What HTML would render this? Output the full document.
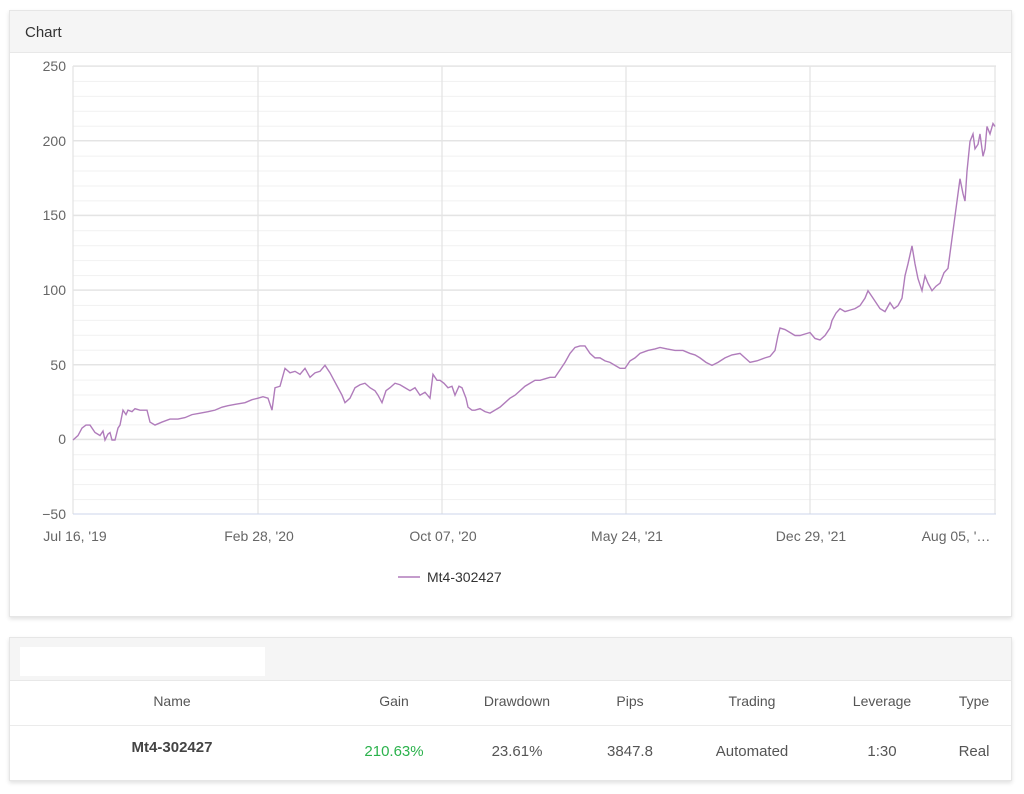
<!DOCTYPE html>
<html><head><meta charset="utf-8"><style>
body{margin:0;width:1024px;height:794px;background:#fff;font-family:"Liberation Sans",sans-serif;position:relative;overflow:hidden}
.panel{position:absolute;left:9px;width:1001px;background:#fff;border:1px solid #e6e6e6;box-shadow:0 2px 4px rgba(0,0,0,.12)}
.hd{background:#f5f5f5;border-bottom:1px solid #e8e8e8}
.t{position:absolute;font-size:14px;color:#555;white-space:nowrap}
.c{transform:translateX(-50%)}
</style></head><body>
<div class="panel" style="top:10px;height:605px">
  <div class="hd" style="height:41px"><div class="t" style="left:15px;top:13px;font-size:15px;color:#333">Chart</div></div>
</div>
<svg style="position:absolute;left:0;top:0" width="1024" height="620">
  <defs><pattern id="g" x="0" y="66" width="10" height="14.933" patternUnits="userSpaceOnUse"><line x1="0" y1="0.5" x2="10" y2="0.5" stroke="#f1f1f1" stroke-width="1"/></pattern></defs>
  <rect x="73" y="66" width="923" height="448" fill="url(#g)"/>
  <g stroke="#e4e4e4" stroke-width="1.3">
    <line x1="73" y1="66" x2="996" y2="66"/><line x1="73" y1="140.7" x2="996" y2="140.7"/><line x1="73" y1="215.3" x2="996" y2="215.3"/><line x1="73" y1="290" x2="996" y2="290"/><line x1="73" y1="364.7" x2="996" y2="364.7"/><line x1="73" y1="439.3" x2="996" y2="439.3"/>
    <line x1="73" y1="66" x2="73" y2="514"/><line x1="258" y1="66" x2="258" y2="514"/><line x1="442" y1="66" x2="442" y2="514"/><line x1="626" y1="66" x2="626" y2="514"/><line x1="810" y1="66" x2="810" y2="514"/><line x1="995" y1="66" x2="995" y2="514"/>
  </g>
  <line x1="73" y1="514" x2="996" y2="514" stroke="#ccd6eb"/>
  <g transform="translate(0,440) scale(1,-1.493)">
  <polyline fill="none" stroke="#b07cbb" stroke-width="1.4" vector-effect="non-scaling-stroke" points="73,0 78,3 82,8 86,10 90,10 95,5 100,3 103,6 105,0 108,4 110,5 112,0 115,0 118,8 120,10 123,20 126,17 128,20 132,19 135,21 140,20 147,20 150,12 155,10 162,12 170,14 178,14 185,15 192,17 200,18 208,19 215,20 222,22 228,23 236,24 245,25 252,27 258,28 263,29 268,28 272,20 275,35 280,36 285,48 290,45 295,46 300,44 305,48 310,42 315,45 320,46 325,50 330,45 334,40 338,35 342,30 345,25 350,28 355,35 360,37 365,38 370,35 375,33 378,30 382,25 386,33 390,35 395,38 400,37 405,35 410,33 415,35 420,30 425,32 430,28 433,44 437,40 440,40 444,38 448,35 452,36 455,30 459,36 462,35 466,28 468,22 472,20 475,20 480,21 485,19 490,18 495,20 500,22 505,25 510,28 515,30 520,33 525,36 530,38 535,40 540,40 545,41 550,42 555,42 560,47 565,52 570,58 575,62 580,63 585,63 590,58 595,55 600,55 605,53 610,52 615,50 620,48 625,48 630,53 635,55 640,58 648,60 655,61 660,62 667,61 675,60 683,60 690,58 695,57 700,55 706,52 712,50 718,52 725,55 732,57 740,58 745,55 750,52 757,53 765,55 770,56 775,60 778,70 780,75 785,74 790,72 795,70 800,70 805,71 810,72 815,68 820,67 825,70 830,75 832,80 836,85 840,88 845,86 850,87 855,88 860,90 865,95 868,100 872,96 876,92 880,88 885,86 890,92 894,88 898,90 902,95 905,110 908,118 912,130 915,118 918,108 922,100 925,110 928,105 932,100 936,103 940,105 944,112 948,115 951,130 955,150 958,165 960,175 963,165 965,160 967,180 970,200 973,205 975,195 978,198 980,205 983,190 985,195 987,210 990,205 993,212 995,210"/>
  </g>
  <g font-size="14" fill="#666" font-family="Liberation Sans,sans-serif" text-anchor="end">
    <text x="66" y="71">250</text><text x="66" y="146">200</text><text x="66" y="220">150</text><text x="66" y="295">100</text><text x="66" y="370">50</text><text x="66" y="444">0</text><text x="66" y="519">−50</text>
  </g>
  <g font-size="14" fill="#666" font-family="Liberation Sans,sans-serif" text-anchor="middle">
    <text x="75" y="541">Jul 16, '19</text><text x="259" y="541">Feb 28, '20</text><text x="443" y="541">Oct 07, '20</text><text x="627" y="541">May 24, '21</text><text x="811" y="541">Dec 29, '21</text><text x="956" y="541">Aug 05, '…</text>
  </g>
  <line x1="398" y1="577" x2="420" y2="577" stroke="#b07cbb" stroke-width="1.5"/>
  <text x="427" y="582" font-size="14" fill="#333" font-family="Liberation Sans,sans-serif">Mt4-302427</text>
</svg>
<div class="panel" style="top:637px;height:142px">
  <div class="hd" style="height:42px;position:relative"><div style="position:absolute;left:10px;top:9px;width:245px;height:29px;background:#fff"></div></div>
  <div style="height:44px;border-bottom:1px solid #ebebeb"></div>
</div>
<div class="t c" style="left:172px;top:693px">Name</div>
<div class="t c" style="left:394px;top:693px">Gain</div>
<div class="t c" style="left:517px;top:693px">Drawdown</div>
<div class="t c" style="left:630px;top:693px">Pips</div>
<div class="t c" style="left:752px;top:693px">Trading</div>
<div class="t c" style="left:882px;top:693px">Leverage</div>
<div class="t c" style="left:974px;top:693px">Type</div>
<div class="t c" style="left:172px;top:739px;font-size:15px;color:#444;font-weight:bold">Mt4-302427</div>
<div class="t c" style="left:394px;top:743px;font-size:15px;color:#2bb24c">210.63%</div>
<div class="t c" style="left:517px;top:743px;font-size:15px">23.61%</div>
<div class="t c" style="left:630px;top:743px;font-size:15px">3847.8</div>
<div class="t c" style="left:752px;top:743px;font-size:15px">Automated</div>
<div class="t c" style="left:882px;top:743px;font-size:15px">1:30</div>
<div class="t c" style="left:974px;top:743px;font-size:15px">Real</div>
</body></html>
